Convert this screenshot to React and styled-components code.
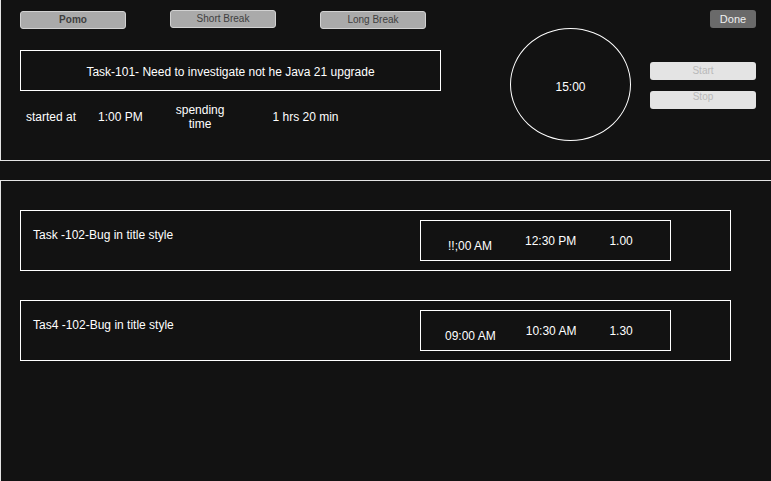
import React from "react";
import styled, { createGlobalStyle } from "styled-components";

const GlobalStyle = createGlobalStyle`
  html, body {
    margin: 0;
    padding: 0;
    background-color: #121212;
  }
  body {
    font-family: "Liberation Sans", Arial, sans-serif;
    color: #ffffff;
  }
  * {
    box-sizing: border-box;
  }
`;

const Page = styled.div`
  display: flex;
  flex-direction: column;
  width: 771px;
  height: 481px;
  overflow: hidden;
  background-color: #121212;
`;

const TopPanel = styled.div`
  display: flex;
  flex-direction: row;
  width: 770px;
  height: 161px;
  border-left: 1px solid #e4e4e4;
  border-bottom: 1px solid #e4e4e4;
  padding-left: 19px;
`;

const LeftColumn = styled.div`
  display: flex;
  flex-direction: column;
  width: 421px;
`;

const ModeRow = styled.div`
  display: flex;
  flex-direction: row;
  align-items: flex-start;
  gap: 44px;
  height: 29px;
`;

const ModeButton = styled.button`
  width: 106px;
  height: 18px;
  margin-top: ${({ $top }) => $top}px;
  padding: 0;
  background-color: #aaaaaa;
  border: 1px solid #d2d2d2;
  border-radius: 3px;
  font-family: "Liberation Sans", Arial, sans-serif;
  font-size: 10px;
  font-weight: ${({ $bold }) => ($bold ? 700 : 400)};
  color: #3f3f3f;
  line-height: 16px;
`;

const TaskBox = styled.div`
  display: flex;
  align-items: center;
  justify-content: center;
  margin-top: 21px;
  width: 421px;
  height: 41px;
  border: 1px solid #ffffff;
  padding-top: 3px;
  font-size: 12px;
`;

const InfoRow = styled.div`
  display: flex;
  flex-direction: row;
  align-items: center;
  margin-top: 12px;
  height: 28px;
  font-size: 12px;
`;

const Info = styled.span`
  margin-left: ${({ $ml }) => $ml}px;
  text-align: center;
  line-height: 14px;
`;

const Clock = styled.div`
  display: flex;
  align-items: center;
  justify-content: center;
  margin-left: 69px;
  margin-top: 28px;
  width: 121px;
  height: 113px;
  border: 1px solid #ffffff;
  border-radius: 50%;
  font-size: 12px;
  padding-top: 4px;
`;

const RightColumn = styled.div`
  display: flex;
  flex-direction: column;
  align-items: flex-end;
  margin-left: 19px;
  width: 106px;
`;

const DoneButton = styled.button`
  margin-top: 10px;
  width: 46px;
  height: 18px;
  padding: 0;
  background-color: #6a6a6a;
  border: none;
  border-radius: 3px;
  font-family: "Liberation Sans", Arial, sans-serif;
  font-size: 11px;
  color: #f0f0f0;
`;

const TimerButton = styled.button`
  display: flex;
  justify-content: center;
  align-items: ${({ $align }) => $align};
  margin-top: ${({ $top }) => $top}px;
  width: 106px;
  height: 18px;
  padding: 0;
  background-color: #e4e4e4;
  border: none;
  border-radius: 3px;
  font-family: "Liberation Sans", Arial, sans-serif;
  font-size: 10px;
  color: #b9b9b9;
  line-height: 12px;
`;

const ListPanel = styled.div`
  display: flex;
  flex-direction: column;
  gap: 29px;
  margin-top: 19px;
  flex: 1;
  border-left: 1px solid #e4e4e4;
  border-top: 1px solid #e4e4e4;
  padding: 29px 0 0 19px;
`;

const TaskRow = styled.div`
  display: flex;
  flex-direction: row;
  justify-content: space-between;
  align-items: flex-start;
  width: 711px;
  height: 61px;
  border: 1px solid #ffffff;
  padding: 9px 59px 0 12px;
`;

const TaskTitle = styled.span`
  margin-top: 8px;
  font-size: 12px;
  line-height: 14px;
`;

const TimeBox = styled.div`
  display: flex;
  flex-direction: row;
  align-items: center;
  width: 251px;
  height: 41px;
  border: 1px solid #ffffff;
  padding-left: 24px;
  font-size: 12px;
`;

const TimeCell = styled.span`
  min-width: ${({ $w }) => $w || 0}px;
  margin-left: ${({ $ml }) => $ml || 0}px;
  margin-top: ${({ $down }) => ($down ? 10 : 0)}px;
  text-align: center;
  line-height: 14px;
`;

const entries = [
  { title: "Task -102-Bug in title style", start: "!!;00 AM", end: "12:30 PM", hours: "1.00" },
  { title: "Tas4 -102-Bug in title style", start: "09:00 AM", end: "10:30 AM", hours: "1.30" },
];

export default function App() {
  return (
    <Page>
      <GlobalStyle />
      <TopPanel>
        <LeftColumn>
          <ModeRow>
            <ModeButton $top={11} $bold>
              Pomo
            </ModeButton>
            <ModeButton $top={10}>Short Break</ModeButton>
            <ModeButton $top={11}>Long Break</ModeButton>
          </ModeRow>
          <TaskBox>Task-101- Need to investigate not he Java 21 upgrade</TaskBox>
          <InfoRow>
            <Info $ml={6}>started at</Info>
            <Info $ml={22}>1:00 PM</Info>
            <Info $ml={33}>
              spending
              <br />
              time
            </Info>
            <Info $ml={48}>1 hrs 20 min</Info>
          </InfoRow>
        </LeftColumn>
        <Clock>15:00</Clock>
        <RightColumn>
          <DoneButton>Done</DoneButton>
          <TimerButton $top={34} $align="center">
            Start
          </TimerButton>
          <TimerButton $top={11} $align="flex-start">
            Stop
          </TimerButton>
        </RightColumn>
      </TopPanel>
      <ListPanel>
        {entries.map((item) => (
          <TaskRow key={item.title}>
            <TaskTitle>{item.title}</TaskTitle>
            <TimeBox>
              <TimeCell $w={50} $down>
                {item.start}
              </TimeCell>
              <TimeCell $ml={30}>{item.end}</TimeCell>
              <TimeCell $ml={33}>{item.hours}</TimeCell>
            </TimeBox>
          </TaskRow>
        ))}
      </ListPanel>
    </Page>
  );
}
